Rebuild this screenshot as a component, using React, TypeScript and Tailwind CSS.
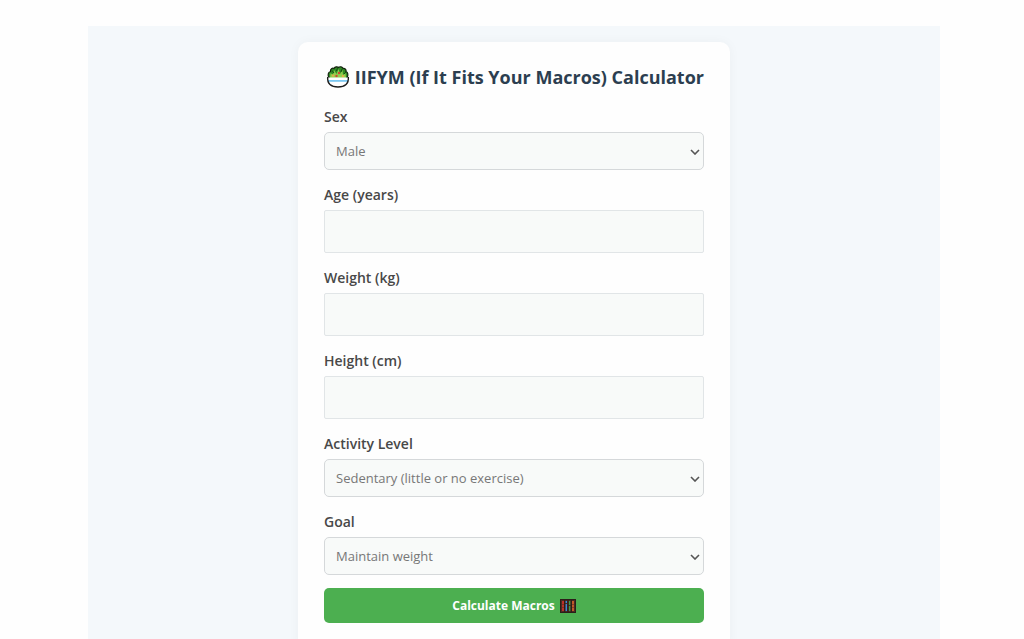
import { useState } from 'react'
import type { ReactNode } from 'react'

const numberFields = [
  { id: 'age', label: 'Age (years)' },
  { id: 'weight', label: 'Weight (kg)' },
  { id: 'height', label: 'Height (cm)' },
]

const sexOptions = ['Male', 'Female']

const activityOptions = [
  'Sedentary (little or no exercise)',
  'Lightly active',
  'Moderately active',
  'Very active',
]

const goalOptions = ['Maintain weight', 'Lose weight', 'Gain weight']

const SaladIcon = () => (
  <svg width="24" height="24" viewBox="0 0 24 24" className="shrink-0" aria-hidden="true">
    {/* Leaves */}
    <path d="M3 13C1.500 10 2 7 4.500 6.500C4 4 6.500 2.500 8 3.500C9 1.500 11.500 1.500 12.500 2.500C14 1 16.500 2 17 3.500C19 3 20.500 5 20 6.500C22 7 22.500 10 21 13Z" fill="#2f8a24" stroke="#15240f" strokeWidth="1.200" />
    <path d="M4 13L4.500 8L7 10L8 5L10.500 9L12.500 4L14 9L16.500 5L17 10L19.500 8L20 13Z" fill="#8ccf4d" />
    <path d="M6 5.500L8 8M11.500 3L10.500 6M16 4L15 7M20 7L18 9" stroke="#174d13" strokeWidth="1" />
    <circle cx="7" cy="10.500" r="1.200" fill="#e0b04a" />
    <circle cx="13" cy="8" r="1.200" fill="#cf4a31" />
    <circle cx="10.500" cy="11" r="1.200" fill="#cf4a31" />
    <circle cx="17" cy="11" r="1.200" fill="#e0b04a" />
    {/* Bowl */}
    <path d="M1.500 12.500H22.500C23 18.500 19 22 12 22C5 22 1 18.500 1.500 12.500Z" fill="#fff" />
    <path d="M2 15H22V16.800H2Z" fill="#7cc8f2" />
    <path d="M1.700 12C1 18.500 5 22 12 22C19 22 23 18.500 22.300 12" fill="none" stroke="#1c1c1c" strokeWidth="1.400" />
  </svg>
)

const AbacusIcon = () => (
  <svg width="16" height="14" viewBox="0 0 16 14" className="shrink-0" aria-hidden="true">
    <rect x="0.500" y="0.500" width="15" height="13" fill="#4a2c22" stroke="#2c1d19" />
    <path d="M4.700 1V13M8 1V13M11.300 1V13" stroke="#1f1512" strokeWidth="0.800" />
    <path d="M3 2V12" stroke="#d8342c" strokeWidth="1.600" strokeDasharray="3 0.500" />
    <path d="M6.300 2V4M6.300 5V12" stroke="#3c87d8" strokeWidth="1.400" />
    <path d="M9.600 2V6M9.600 7V12" stroke="#3f9c48" strokeWidth="1.400" />
    <path d="M13 2V12" stroke="#e0662c" strokeWidth="1.600" strokeDasharray="3 0.500" />
  </svg>
)

const Field = ({ id, label, children }: { id: string; label: string; children: ReactNode }) => (
  <div>
    <label htmlFor={id} className="block mb-[5px] text-sm leading-5 font-semibold text-[#484848]">
      {label}
    </label>
    {children}
  </div>
)

const SelectField = ({ id, label, options }: { id: string; label: string; options: string[] }) => (
  <Field id={id} label={label}>
    <div className="relative">
      <select
        id={id}
        className="block w-full h-[38px] pt-[2px] pl-[11px] pr-8 appearance-none rounded-[5px] border border-[#d5d8da] bg-[#f8faf9] text-[13px] text-[#777]"
      >
        {options.map(option => (
          <option key={option}>{option}</option>
        ))}
      </select>
      <svg
        width="10"
        height="6"
        viewBox="0 0 10 6"
        fill="none"
        className="absolute right-1 top-[17px] pointer-events-none"
        aria-hidden="true"
      >
        <path d="M1 1L5 5L9 1" stroke="#555" strokeWidth="1.600" />
      </svg>
    </div>
  </Field>
)

export default function App() {
  const [values, setValues] = useState<Record<string, string>>({})

  return (
    <main className="pt-[26px] pl-[88px] pr-[84px] bg-[#fefefe] font-['Open_Sans',sans-serif]">
      <div className="min-h-screen pt-4 pb-10 bg-[#f4f8fb]">
        <form
          onSubmit={e => e.preventDefault()}
          className="w-full max-w-[432px] mx-auto px-[26px] pt-[22px] pb-8 rounded-[10px] bg-[#fefefe] shadow-[0_0_12px_rgba(0,0,0,0.04)]"
        >
          <h1 className="flex items-center justify-end gap-[5px] mb-[17px] text-lg leading-[26px] font-bold text-[#2c3e50] whitespace-nowrap">
            <SaladIcon />
            IIFYM (If It Fits Your Macros) Calculator
          </h1>

          <div className="flex flex-col gap-[15px]">
            <SelectField id="sex" label="Sex" options={sexOptions} />
            {numberFields.map(field => (
              <Field key={field.id} id={field.id} label={field.label}>
                <input
                  id={field.id}
                  type="number"
                  value={values[field.id] ?? ''}
                  onChange={e => setValues({ ...values, [field.id]: e.target.value })}
                  className="block w-full h-[43px] px-3 rounded-[2px] border border-[#e1e5e7] bg-[#f8faf9] text-[13px] text-[#777]"
                />
              </Field>
            ))}
            <SelectField id="activity" label="Activity Level" options={activityOptions} />
            <SelectField id="goal" label="Goal" options={goalOptions} />
          </div>

          <button
            type="submit"
            className="flex items-center justify-center gap-[5px] w-full h-[35px] mt-[13px] rounded-[5px] bg-[#4caf50] text-xs font-bold text-white"
          >
            Calculate Macros
            <AbacusIcon />
          </button>
        </form>
      </div>
    </main>
  )
}
